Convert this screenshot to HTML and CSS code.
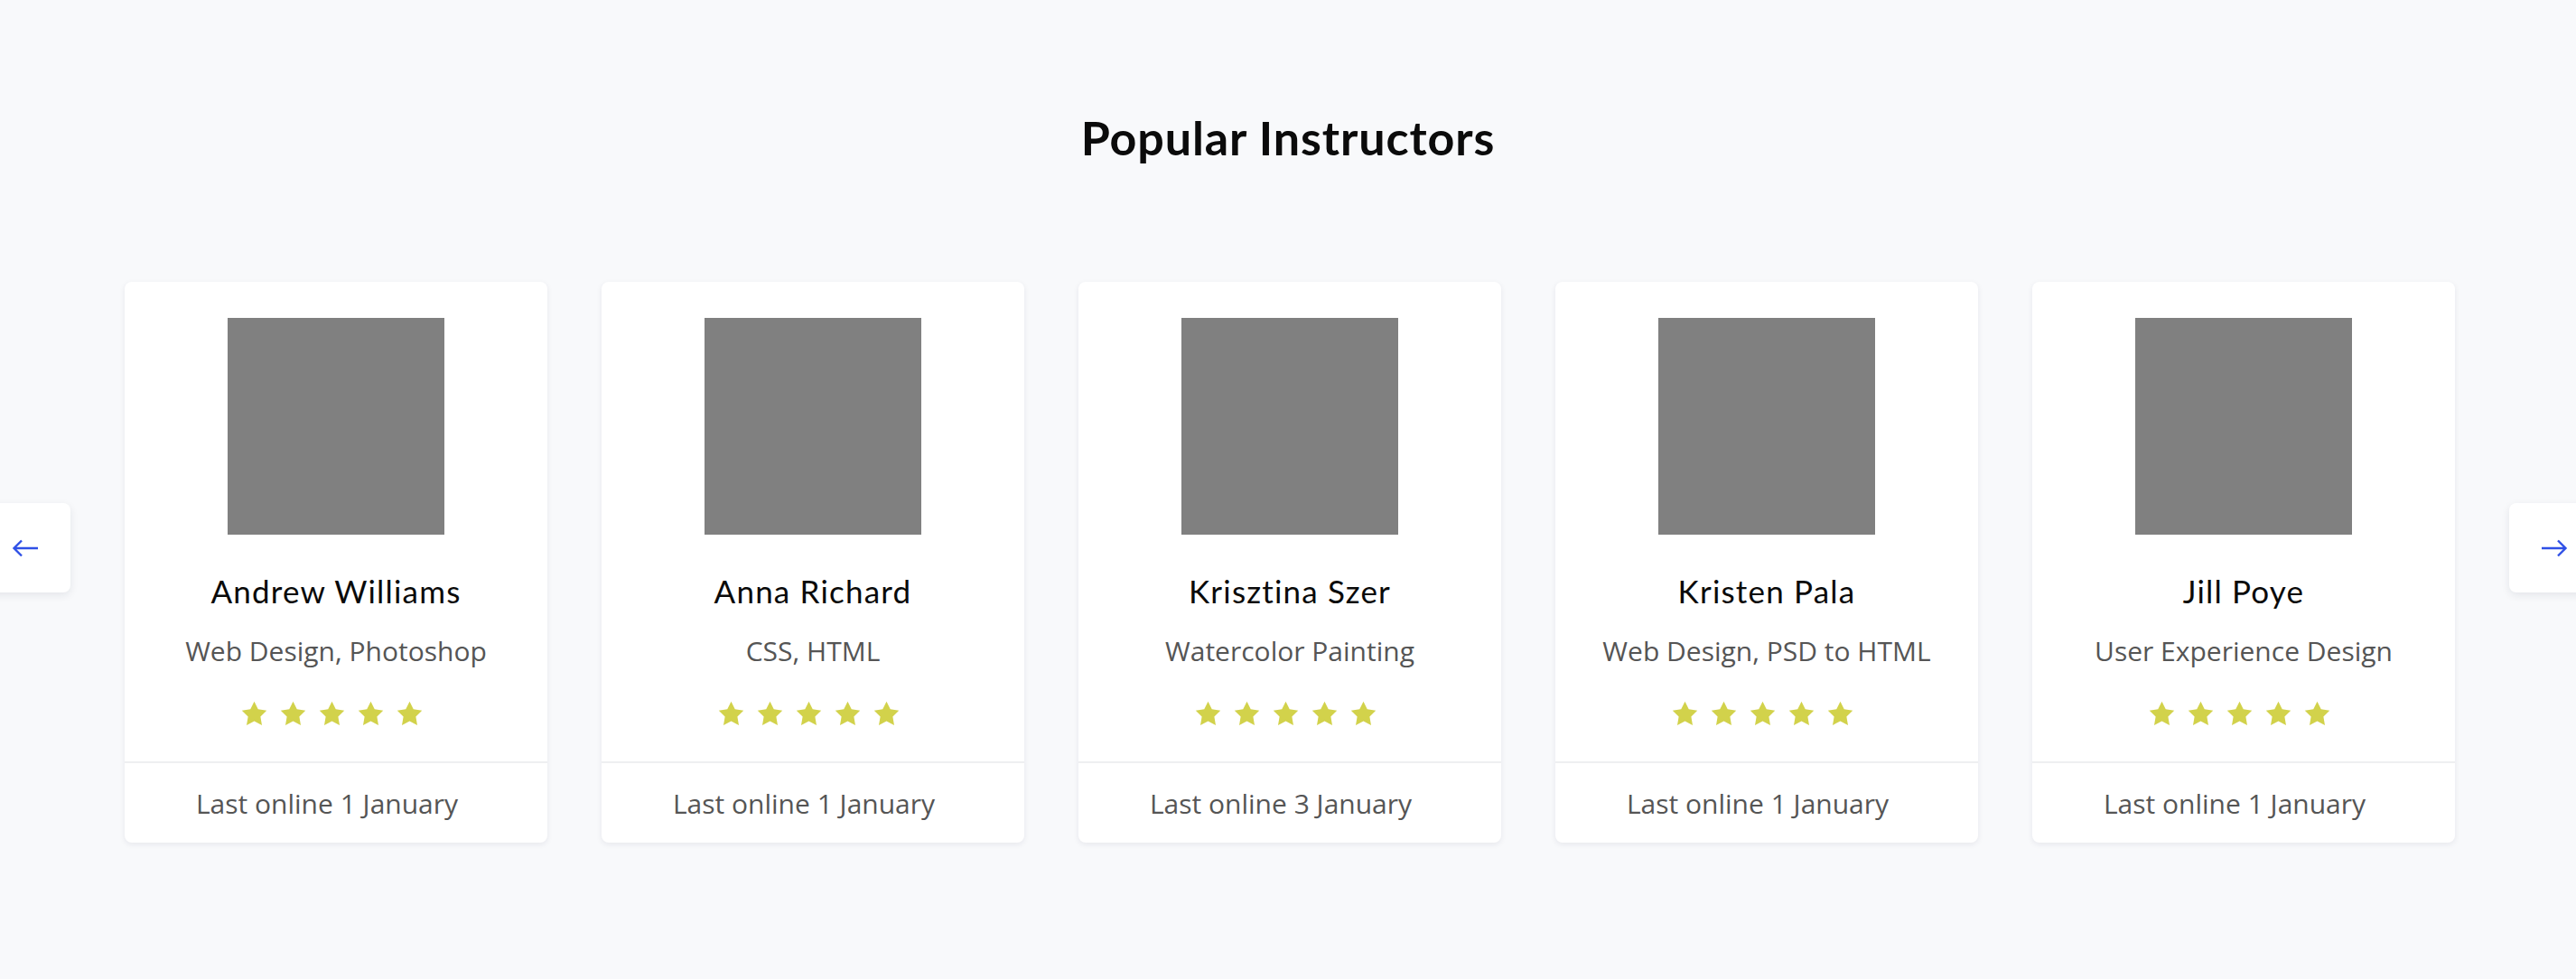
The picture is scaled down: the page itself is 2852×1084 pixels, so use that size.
FILE: index.html
```html
<!DOCTYPE html>
<html lang="en">
<head>
<meta charset="utf-8">
<title>Popular Instructors</title>
<link rel="stylesheet" href="styles.css">
</head>
<body>
<section class="instructors">
  <h2 class="section-title">Popular Instructors</h2>
  <div class="carousel">
    <button class="nav-btn nav-prev" aria-label="Previous">
      <svg viewBox="0 0 30 20" width="30" height="20"><path d="M29 10H2M11 1.5L2.5 10L11 18.5"/></svg>
    </button>
    <div class="cards">
      <article class="card">
        <div class="avatar"></div>
        <h3 class="name">Andrew Williams</h3>
        <p class="skills">Web Design, Photoshop</p>
        <div class="stars">
          <svg viewBox="0 0 24 24"><path d="M12 2l3.09 6.26L22 9.27l-5 4.87 1.18 6.88L12 17.77l-6.18 3.25L7 14.14 2 9.27l6.91-1.01L12 2z"/></svg>
          <svg viewBox="0 0 24 24"><path d="M12 2l3.09 6.26L22 9.27l-5 4.87 1.18 6.88L12 17.77l-6.18 3.25L7 14.14 2 9.27l6.91-1.01L12 2z"/></svg>
          <svg viewBox="0 0 24 24"><path d="M12 2l3.09 6.26L22 9.27l-5 4.87 1.18 6.88L12 17.77l-6.18 3.25L7 14.14 2 9.27l6.91-1.01L12 2z"/></svg>
          <svg viewBox="0 0 24 24"><path d="M12 2l3.09 6.26L22 9.27l-5 4.87 1.18 6.88L12 17.77l-6.18 3.25L7 14.14 2 9.27l6.91-1.01L12 2z"/></svg>
          <svg viewBox="0 0 24 24"><path d="M12 2l3.09 6.26L22 9.27l-5 4.87 1.18 6.88L12 17.77l-6.18 3.25L7 14.14 2 9.27l6.91-1.01L12 2z"/></svg>
        </div>
        <div class="card-footer">Last online 1 January</div>
      </article>
      <article class="card">
        <div class="avatar"></div>
        <h3 class="name">Anna Richard</h3>
        <p class="skills">CSS, HTML</p>
        <div class="stars">
          <svg viewBox="0 0 24 24"><path d="M12 2l3.09 6.26L22 9.27l-5 4.87 1.18 6.88L12 17.77l-6.18 3.25L7 14.14 2 9.27l6.91-1.01L12 2z"/></svg>
          <svg viewBox="0 0 24 24"><path d="M12 2l3.09 6.26L22 9.27l-5 4.87 1.18 6.88L12 17.77l-6.18 3.25L7 14.14 2 9.27l6.91-1.01L12 2z"/></svg>
          <svg viewBox="0 0 24 24"><path d="M12 2l3.09 6.26L22 9.27l-5 4.87 1.18 6.88L12 17.77l-6.18 3.25L7 14.14 2 9.27l6.91-1.01L12 2z"/></svg>
          <svg viewBox="0 0 24 24"><path d="M12 2l3.09 6.26L22 9.27l-5 4.87 1.18 6.88L12 17.77l-6.18 3.25L7 14.14 2 9.27l6.91-1.01L12 2z"/></svg>
          <svg viewBox="0 0 24 24"><path d="M12 2l3.09 6.26L22 9.27l-5 4.87 1.18 6.88L12 17.77l-6.18 3.25L7 14.14 2 9.27l6.91-1.01L12 2z"/></svg>
        </div>
        <div class="card-footer">Last online 1 January</div>
      </article>
      <article class="card">
        <div class="avatar"></div>
        <h3 class="name">Krisztina Szer</h3>
        <p class="skills">Watercolor Painting</p>
        <div class="stars">
          <svg viewBox="0 0 24 24"><path d="M12 2l3.09 6.26L22 9.27l-5 4.87 1.18 6.88L12 17.77l-6.18 3.25L7 14.14 2 9.27l6.91-1.01L12 2z"/></svg>
          <svg viewBox="0 0 24 24"><path d="M12 2l3.09 6.26L22 9.27l-5 4.87 1.18 6.88L12 17.77l-6.18 3.25L7 14.14 2 9.27l6.91-1.01L12 2z"/></svg>
          <svg viewBox="0 0 24 24"><path d="M12 2l3.09 6.26L22 9.27l-5 4.87 1.18 6.88L12 17.77l-6.18 3.25L7 14.14 2 9.27l6.91-1.01L12 2z"/></svg>
          <svg viewBox="0 0 24 24"><path d="M12 2l3.09 6.26L22 9.27l-5 4.87 1.18 6.88L12 17.77l-6.18 3.25L7 14.14 2 9.27l6.91-1.01L12 2z"/></svg>
          <svg viewBox="0 0 24 24"><path d="M12 2l3.09 6.26L22 9.27l-5 4.87 1.18 6.88L12 17.77l-6.18 3.25L7 14.14 2 9.27l6.91-1.01L12 2z"/></svg>
        </div>
        <div class="card-footer">Last online 3 January</div>
      </article>
      <article class="card">
        <div class="avatar"></div>
        <h3 class="name">Kristen Pala</h3>
        <p class="skills">Web Design, PSD to HTML</p>
        <div class="stars">
          <svg viewBox="0 0 24 24"><path d="M12 2l3.09 6.26L22 9.27l-5 4.87 1.18 6.88L12 17.77l-6.18 3.25L7 14.14 2 9.27l6.91-1.01L12 2z"/></svg>
          <svg viewBox="0 0 24 24"><path d="M12 2l3.09 6.26L22 9.27l-5 4.87 1.18 6.88L12 17.77l-6.18 3.25L7 14.14 2 9.27l6.91-1.01L12 2z"/></svg>
          <svg viewBox="0 0 24 24"><path d="M12 2l3.09 6.26L22 9.27l-5 4.87 1.18 6.88L12 17.77l-6.18 3.25L7 14.14 2 9.27l6.91-1.01L12 2z"/></svg>
          <svg viewBox="0 0 24 24"><path d="M12 2l3.09 6.26L22 9.27l-5 4.87 1.18 6.88L12 17.77l-6.18 3.25L7 14.14 2 9.27l6.91-1.01L12 2z"/></svg>
          <svg viewBox="0 0 24 24"><path d="M12 2l3.09 6.26L22 9.27l-5 4.87 1.18 6.88L12 17.77l-6.18 3.25L7 14.14 2 9.27l6.91-1.01L12 2z"/></svg>
        </div>
        <div class="card-footer">Last online 1 January</div>
      </article>
      <article class="card">
        <div class="avatar"></div>
        <h3 class="name">Jill Poye</h3>
        <p class="skills">User Experience Design</p>
        <div class="stars">
          <svg viewBox="0 0 24 24"><path d="M12 2l3.09 6.26L22 9.27l-5 4.87 1.18 6.88L12 17.77l-6.18 3.25L7 14.14 2 9.27l6.91-1.01L12 2z"/></svg>
          <svg viewBox="0 0 24 24"><path d="M12 2l3.09 6.26L22 9.27l-5 4.87 1.18 6.88L12 17.77l-6.18 3.25L7 14.14 2 9.27l6.91-1.01L12 2z"/></svg>
          <svg viewBox="0 0 24 24"><path d="M12 2l3.09 6.26L22 9.27l-5 4.87 1.18 6.88L12 17.77l-6.18 3.25L7 14.14 2 9.27l6.91-1.01L12 2z"/></svg>
          <svg viewBox="0 0 24 24"><path d="M12 2l3.09 6.26L22 9.27l-5 4.87 1.18 6.88L12 17.77l-6.18 3.25L7 14.14 2 9.27l6.91-1.01L12 2z"/></svg>
          <svg viewBox="0 0 24 24"><path d="M12 2l3.09 6.26L22 9.27l-5 4.87 1.18 6.88L12 17.77l-6.18 3.25L7 14.14 2 9.27l6.91-1.01L12 2z"/></svg>
        </div>
        <div class="card-footer">Last online 1 January</div>
      </article>
    </div>
    <button class="nav-btn nav-next" aria-label="Next">
      <svg viewBox="0 0 30 20" width="30" height="20"><path d="M1 10H28M19 1.5L27.5 10L19 18.5"/></svg>
    </button>
  </div>
</section>
</body>
</html>
```

FILE: styles.css
```css
html, body {
  margin: 0;
  padding: 0;
}

body {
  background: #f8f9fb;
  font-family: "Open Sans", "Noto Sans", sans-serif;
  color: #555;
  overflow: hidden;
  height: 1084px;
}

.instructors {
  padding-top: 122px;
}

.section-title {
  margin: 0;
  text-align: center;
  font-family: Lato, "Noto Sans", sans-serif;
  font-weight: 700;
  font-size: 52px;
  line-height: 60px;
  color: #0b0b0b;
  letter-spacing: 0.9px;
}

.carousel {
  position: relative;
  margin-top: 130px;
}

.cards {
  display: flex;
  justify-content: center;
  gap: 60px;
  padding-left: 4px;
}

.card {
  width: 468px;
  height: 621px;
  background: #fff;
  border-radius: 8px;
  box-shadow: 0 2px 6px rgba(20, 30, 60, 0.08);
  display: flex;
  flex-direction: column;
  align-items: center;
  box-sizing: border-box;
  padding-top: 40px;
}

.avatar {
  width: 240px;
  height: 240px;
  background: #808080;
  flex: none;
}

.name {
  margin: 42px 0 0;
  font-family: Lato, "Noto Sans", sans-serif;
  font-weight: 400;
  font-size: 35px;
  line-height: 40px;
  color: #0a0a0a;
  letter-spacing: 1.2px;
}

.skills {
  margin: 27px 0 0;
  font-size: 30px;
  line-height: 40px;
  color: #555;
}

.stars {
  margin-top: 34px;
  margin-right: 10px;
  display: flex;
  gap: 10px;
  height: 30px;
  align-items: center;
}

.stars svg {
  width: 33px;
  height: 33px;
  fill: #d2d24b;
}

.card-footer {
  margin-top: auto;
  align-self: stretch;
  height: 88px;
  border-top: 2px solid #eeeff1;
  display: flex;
  align-items: center;
  justify-content: center;
  padding-right: 20px;
  font-size: 30px;
  color: #555;
}

.nav-btn {
  position: absolute;
  top: 245px;
  width: 100px;
  height: 99px;
  border: none;
  border-radius: 8px;
  background: #fff;
  box-shadow: 0 3px 10px rgba(20, 30, 60, 0.09);
  display: flex;
  align-items: center;
  justify-content: center;
  padding: 0;
  cursor: pointer;
}

.nav-prev {
  left: -22px;
}

.nav-next {
  right: -26px;
}

.nav-btn svg {
  width: 30px;
  height: 20px;
  fill: none;
  stroke: #2f50e6;
  stroke-width: 2.4;
}
```
